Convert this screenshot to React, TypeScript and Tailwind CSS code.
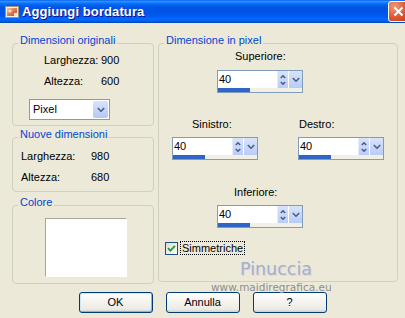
import React from "react";

function Group({
  title,
  className,
  children,
}: {
  title: string;
  className: string;
  children?: React.ReactNode;
}) {
  return (
    <div className={`relative border border-[#D0D0BF] rounded-[4px] ${className}`}>
      <span className="absolute left-[5px] -top-[10px] px-[2px] bg-[#ECE9D8] text-[#0046D5] leading-[13px] whitespace-nowrap">
        {title}
      </span>
      {children}
    </div>
  );
}

function Chevron({ w, h, dir }: { w: number; h: number; dir: "up" | "down" }) {
  const d =
    dir === "down"
      ? `M0.8 1 L${w / 2} ${h - 0.8} L${w - 0.8} 1`
      : `M0.8 ${h - 1} L${w / 2} 0.8 L${w - 0.8} ${h - 1}`;
  return (
    <svg width={w} height={h} viewBox={`0 0 ${w} ${h}`} className="block">
      <path d={d} fill="none" stroke="#4D6185" strokeWidth="1.6" />
    </svg>
  );
}

function SpinBox({ className = "" }: { className?: string }) {
  return (
    <div className={`w-[86px] h-[23px] border border-[#7F9DB9] bg-white flex flex-col ${className}`}>
      <div className="h-[17px] flex">
        <div className="flex-1 pl-[1px] leading-[17px]">40</div>
        <div className="w-[11px] bg-[linear-gradient(180deg,#D8E3FC,#B9CCF7)] flex flex-col items-center justify-center gap-[2px] border-l border-[#E6EDFD]">
          <Chevron w={6} h={4} dir="up" />
          <Chevron w={6} h={4} dir="down" />
        </div>
        <div className="w-[13px] ml-[1px] bg-[linear-gradient(180deg,#D8E3FC,#B9CCF7)] flex items-center justify-center">
          <Chevron w={8} h={5} dir="down" />
        </div>
      </div>
      <div className="h-[4px] bg-[#F1EFE6] flex">
        <div className="w-[32px] h-full bg-[#2F66C6]" />
      </div>
    </div>
  );
}

function XPButton({ label, def = false }: { label: string; def?: boolean }) {
  return (
    <div
      className={`w-[74px] h-[21px] rounded-[3px] border border-[#003C74] bg-[linear-gradient(180deg,#FFFFFF_0%,#F6F5F0_40%,#ECEBE6_85%,#D6D0C5_100%)] flex items-center justify-center ${
        def
          ? "shadow-[inset_-1px_-1px_#8DB2E3,inset_1px_1px_#CEE7FF]"
          : ""
      }`}
    >
      {label}
    </div>
  );
}

export default function App() {
  return (
    <div className="w-[405px] h-[318px] bg-[#ECE9D8] overflow-hidden relative font-['Liberation_Sans',sans-serif] text-[11px] leading-[13px] text-black">
      {/* Title bar */}
      <div className="h-[23px] flex items-center bg-[linear-gradient(180deg,#0058EE_0%,#3593FF_5%,#288EFF_8%,#127DFF_12%,#036FFC_16%,#0262EE_22%,#0057E5_30%,#0054E3_40%,#0055EB_60%,#005BF5_72%,#026AFE_82%,#0062EF_90%,#0052D6_96%,#0040AB_100%)]">
        <svg width="16" height="16" viewBox="0 0 16 16" className="ml-[4px] block">
          <defs>
            <linearGradient id="pic" x1="0" y1="0" x2="1" y2="1">
              <stop offset="0" stopColor="#F7C9A0" />
              <stop offset="0.5" stopColor="#E07A4A" />
              <stop offset="1" stopColor="#B9473A" />
            </linearGradient>
          </defs>
          <rect x="1.5" y="2.5" width="13" height="11" fill="#F3F0E6" stroke="#9A9488" />
          <rect x="3" y="4" width="10" height="8" fill="url(#pic)" />
          <circle cx="6" cy="7" r="1.6" fill="#FBE3C4" />
          <rect x="10" y="9" width="3" height="3" fill="#FFFFFF" opacity="0.8" />
        </svg>
        <span className="ml-[2px] font-['Liberation_Sans',sans-serif] font-bold text-[13px] tracking-[0.1px] text-white [text-shadow:1px_1px_#0F1089]">
          Aggiungi bordatura
        </span>
        <div className="ml-auto mr-[-4px] w-[21px] h-[21px] rounded-[3px] border border-white bg-[radial-gradient(circle_at_30%_25%,#F09A7E,#E0562E_55%,#C23B17)] flex items-center justify-center">
          <svg width="11" height="11" viewBox="0 0 11 11" className="block">
            <path d="M1.5 1.5 L9.5 9.5 M9.5 1.5 L1.5 9.5" stroke="white" strokeWidth="2" />
          </svg>
        </div>
      </div>

      {/* Body */}
      <div className="flex items-start pl-[12px] pt-[20px]">
        <div className="w-[142px] flex flex-col">
          <Group title="Dimensioni originali" className="h-[83px]">
            <div className="pt-[10px] pl-[31px] flex flex-col gap-[8px]">
              <div className="flex">
                <span className="w-[57px]">Larghezza:</span>
                <span>900</span>
              </div>
              <div className="flex">
                <span className="w-[57px]">Altezza:</span>
                <span>600</span>
              </div>
            </div>
            <div className="ml-[16px] mt-[11px] w-[81px] h-[21px] border border-[#7F9DB9] bg-white flex items-stretch">
              <span className="flex-1 pl-[3px] leading-[19px]">Pixel</span>
              <div className="w-[15px] m-[1px] rounded-[2px] bg-[linear-gradient(180deg,#D8E3FC,#B4C8F6)] flex items-center justify-center">
                <Chevron w={8} h={5} dir="down" />
              </div>
            </div>
          </Group>

          <Group title="Nuove dimensioni" className="h-[55px] mt-[11px]">
            <div className="pt-[12px] pl-[8px] flex flex-col gap-[8px]">
              <div className="flex">
                <span className="w-[70px]">Larghezza:</span>
                <span>980</span>
              </div>
              <div className="flex">
                <span className="w-[70px]">Altezza:</span>
                <span>680</span>
              </div>
            </div>
          </Group>

          <Group title="Colore" className="h-[79px] mt-[13px]">
            <div className="ml-[32px] mt-[12px] w-[82px] h-[59px] bg-white border-t border-l border-[#ACA899] border-r-[#FFFFFF] border-b-[#FFFFFF] border-r border-b" />
          </Group>
        </div>

        <Group title="Dimensione in pixel" className="w-[240px] h-[239px] ml-[4px]">
          <div className="flex flex-col">
            <div className="ml-[58px] mt-[6px] flex flex-col">
              <span className="ml-[18px]">Superiore:</span>
              <SpinBox className="mt-[7px]" />
            </div>
            <div className="ml-[13px] mt-[25px] flex">
              <div className="flex flex-col">
                <span className="ml-[20px]">Sinistro:</span>
                <SpinBox className="mt-[6px]" />
              </div>
              <div className="flex flex-col ml-[40px]">
                <span className="ml-[1px]">Destro:</span>
                <SpinBox className="mt-[6px]" />
              </div>
            </div>
            <div className="ml-[58px] mt-[26px] flex flex-col">
              <span className="ml-[17px]">Inferiore:</span>
              <SpinBox className="mt-[6px]" />
            </div>
            <div className="ml-[6px] mt-[13px] flex items-center">
              <div className="w-[13px] h-[13px] border border-[#1C5180] bg-[linear-gradient(135deg,#DCDCD7,#FFFFFF)] flex items-center justify-center">
                <svg width="9" height="9" viewBox="0 0 9 9" className="block">
                  <path d="M1 4.2 L3.4 6.6 L8 1.8" fill="none" stroke="#21A121" strokeWidth="1.8" />
                </svg>
              </div>
              <span className="ml-[2px] px-[1px] border border-dotted border-black leading-[12px]">Simmetriche</span>
            </div>
          </div>
        </Group>
      </div>

      {/* Buttons */}
      <div className="flex justify-center gap-[13px] mt-[8px]">
        <XPButton label="OK" def />
        <XPButton label="Annulla" />
        <XPButton label="?" />
      </div>

      {/* Watermark */}
      <div className="absolute left-[240px] top-[259px] font-['DejaVu_Sans',sans-serif] text-[17.5px] leading-[20px] text-[#A8ADC8] [text-shadow:1px_1px_#D8DAE6]">
        Pinuccia
      </div>
      <div className="absolute left-[211px] top-[281px] font-['DejaVu_Sans',sans-serif] text-[10.5px] leading-[12px] text-[#8E8E8E]">
        www.maidiregrafica.eu
      </div>
    </div>
  );
}
